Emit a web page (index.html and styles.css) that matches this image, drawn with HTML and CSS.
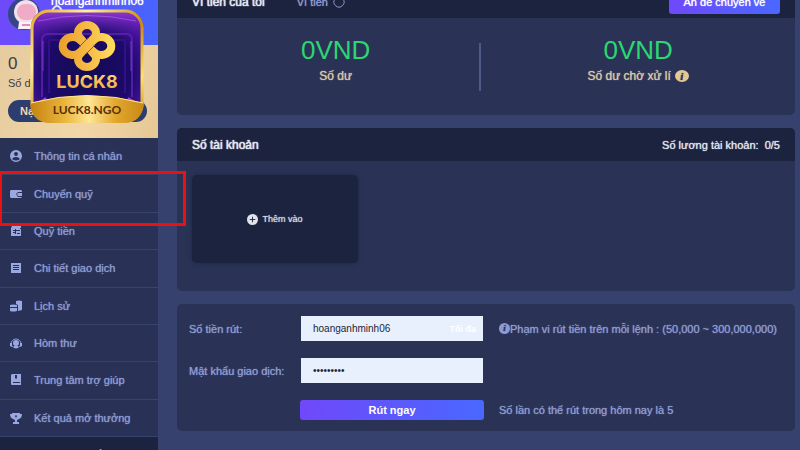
FILE: index.html
```html
<!DOCTYPE html>
<html lang="vi">
<head>
<meta charset="utf-8">
<title>Ví tiền của tôi</title>
<link rel="stylesheet" href="styles.css">
</head>
<body>
<div class="page">
  <aside class="sidebar">
    <div class="profile">
      <svg class="avatar" viewBox="0 0 32 32" aria-hidden="true">
        <circle cx="16" cy="16" r="16" fill="#364684"/>
        <circle cx="18" cy="14" r="12" fill="#f3dfe9"/>
        <rect x="9" y="6" width="19" height="16" rx="8" fill="#f0abc6"/>
        <path d="M11 24h14l2 7H10z" fill="#f8f2f8"/>
        <path d="M14 26h8v2h-8z" fill="#e78cae"/>
      </svg>
      <div class="user">
        <span class="user-name">hoanganhminh06</span>
        <svg class="rank" viewBox="0 0 12 12" aria-hidden="true"><path d="M1 7Q6 -3 11 7" fill="none" stroke="#dfe3ff" stroke-width="2"/></svg>
      </div>
    </div>
    <div class="balance">
      <span class="balance-value">0</span>
      <span class="balance-label">Số dư</span>
      <button class="deposit" type="button">Nạp</button>
    </div>
    <svg class="brand" viewBox="0 0 114 114" role="img" aria-label="LUCK8">
      <defs>
        <linearGradient id="rim" x1="0" y1="0" x2="1" y2="1">
          <stop offset="0" stop-color="#e6a51c"/><stop offset=".25" stop-color="#fff0a0"/><stop offset=".55" stop-color="#c98a10"/><stop offset=".8" stop-color="#ffe36a"/><stop offset="1" stop-color="#c98a10"/>
        </linearGradient>
        <radialGradient id="field" cx=".5" cy=".55" r=".65">
          <stop offset="0" stop-color="#130b52"/><stop offset=".6" stop-color="#1c0a68"/><stop offset="1" stop-color="#5d18ba"/>
        </radialGradient>
        <linearGradient id="top" x1="0" y1="0" x2="0" y2="1">
          <stop offset="0" stop-color="#9a3fdc"/><stop offset="1" stop-color="#4a169c" stop-opacity="0"/>
        </linearGradient>
        <linearGradient id="band">
          <stop offset="0" stop-color="#c5830f"/><stop offset=".3" stop-color="#e9b53c"/><stop offset=".52" stop-color="#ffe594"/><stop offset=".75" stop-color="#e3a72d"/><stop offset="1" stop-color="#c78a16"/>
        </linearGradient>
        <linearGradient id="gold" gradientUnits="userSpaceOnUse" x1="-28" y1="0" x2="28" y2="0">
          <stop offset="0" stop-color="#eaa02c"/><stop offset=".5" stop-color="#f6ba45"/><stop offset="1" stop-color="#ffdf5d"/>
        </linearGradient>
        <linearGradient id="word" x1="0" y1="0" x2="0" y2="1">
          <stop offset="0" stop-color="#ffdc7b"/><stop offset="1" stop-color="#eda73b"/>
        </linearGradient>
        <clipPath id="tile"><rect x="1" y="1" width="112" height="112" rx="17"/></clipPath>
      </defs>
      <g clip-path="url(#tile)">
        <rect width="114" height="114" fill="url(#field)"/>
        <rect width="114" height="30" fill="url(#top)"/>
        <path d="M8 12Q57 1 106 12" fill="none" stroke="#bd6af0" stroke-width="1" opacity=".6"/>
        <path d="M12 88V31q0-6 6-6h78q6 0 6 6v57" fill="none" stroke="#6824bd" stroke-width="2" opacity=".7"/>
        <path d="M19 84V31h76v53" fill="none" stroke="#32108a" stroke-width="2"/>
        <path d="M13 32v30M101 32v30" stroke="#9a42e6" stroke-width="1" opacity=".7"/>
        <path d="M98 89l12 7M16 89L5 96" stroke="#a33ee6" stroke-width="2"/>
      </g>
      <rect x="2" y="2" width="110" height="110" rx="17" fill="none" stroke="url(#rim)" stroke-width="3"/>
      <path d="M0 94Q57 79 114 94Q112 114 94 114H20Q2 114 0 94Z" fill="url(#band)"/>
      <path d="M1 94Q57 79 113 94" fill="none" stroke="#ffe68d" stroke-width="1"/>
      <g transform="translate(57 37)" fill="none" stroke="url(#gold)" stroke-width="8">
        <path d="M0 0L-6 -7A9 8 0 1 1 6 -7L-6 7A9 8 0 1 0 6 7L0 0"/>
        <path d="M0 0L-8 -7A10 9 0 1 0 -8 7L8 -7A10 9 0 1 1 8 7L0 0"/>
        <path d="M-8 1L1 -8M-1 8L8 -1" stroke="#9a5716" stroke-width="1"/>
        <path d="M-8 8L8 -8" stroke-width="7"/>
      </g>
      <text x="57" y="79" text-anchor="middle" class="brand-name" fill="url(#word)">LUCK8</text>
      <text x="57" y="105" text-anchor="middle" class="brand-site">LUCK8.NGO</text>
    </svg>
    <nav class="menu">
      <a href="#"><svg viewBox="0 0 14 14"><path fill-rule="evenodd" d="M7 1a6 6 0 1 0 0 12A6 6 0 0 0 7 1zm0 2a2 2 0 1 1 0 4 2 2 0 0 1 0-4zM3 10q1-2 4-2t4 2q-4 3-8 0z"/></svg>Thông tin cá nhân</a>
      <a href="#" class="marked"><svg viewBox="0 0 14 14"><path d="M2 3h10l1 1v1H9L7 7l2 3h4l-1 1H2l-1-1V4z"/><path d="M9 6h4v3H9L8 7z"/></svg>Chuyển quỹ</a>
      <a href="#"><svg viewBox="0 0 14 14"><path fill-rule="evenodd" d="M3 2h9v2h-1v1h1v7H2V4zM6 5v1H4v1h2v1H4v1h2v1h1V7h4V6H7V5zm2 4v1h3V9z"/></svg>Quỹ tiền</a>
      <a href="#"><svg viewBox="0 0 14 14"><path fill-rule="evenodd" d="M2 2h10v10H2zm2 2v1h6V4zm0 2v1h6V6zm0 2v1h6V8z"/></svg>Chi tiết giao dịch</a>
      <a href="#"><svg viewBox="0 0 14 14"><path d="M7 2q3-1 6 0v9l-4 1V6L7 5zM1 6q3-1 7 0v2H1zM1 9h7v3q-4 1-7 0z"/></svg>Lịch sử</a>
      <a href="#"><svg viewBox="0 0 14 14"><path d="M2 8a5 5 0 1 1 10 0M3 10q4 4 8 0" fill="none" stroke="currentColor"/><circle cx="7" cy="7" r="3"/><path d="M1 7h2v4L1 10zM11 7h2v3l-2 1zM5 10h4v2H5z"/></svg>Hòm thư</a>
      <a href="#"><svg viewBox="0 0 14 14"><path fill-rule="evenodd" d="M3 1h9v11H3q-1 0-1-1V2zm3 1v4l1-1 1 1V2zM4 9v1h7V9z"/></svg>Trung tâm trợ giúp</a>
      <a href="#"><svg viewBox="0 0 14 14"><path fill-rule="evenodd" d="M3 2h8v1h2q0 4-3 5L8 9v2h2v2H4v-2h2V9L4 8Q1 7 1 3h2zm4 2L6 5l1 2 1-2z"/></svg>Kết quả mở thưởng</a>
    </nav>
    <div class="sidebar-foot">Trang chủ cổ</div>
  </aside>

  <main class="content">
    <section class="card">
      <header class="card-head">
        <h2>Ví tiền của tôi</h2>
        <span class="wallet">Ví tiền
          <svg viewBox="0 0 14 14" aria-hidden="true"><path d="M3 4a5 5 0 1 0 8 0" fill="none" stroke="currentColor" stroke-width="1"/></svg>
        </span>
        <button class="primary transfer" type="button">Ấn để chuyển về</button>
      </header>
      <div class="totals">
        <div class="total"><b>0VND</b><span>Số dư</span></div>
        <div class="total"><b>0VND</b><span>Số dư chờ xử lí <i class="info sand">i</i></span></div>
      </div>
    </section>

    <section class="card">
      <header class="card-head">
        <h2>Số tài khoản</h2>
        <span class="count">Số lương tài khoản:&nbsp; 0/5</span>
      </header>
      <div class="accounts">
        <button class="add" type="button">
          <svg viewBox="0 0 12 12" aria-hidden="true"><circle cx="6" cy="6" r="6" fill="#dfe3ea"/><path d="M3 6h6M6 3v6" stroke="#1c233e" stroke-width="1"/></svg>
          Thêm vào
        </button>
      </div>
    </section>

    <form class="card withdraw">
      <label for="amount">Số tiền rút:</label>
      <div class="field">
        <input id="amount" type="text" value="hoanganhminh06">
        <button class="max" type="button">Tối đa</button>
      </div>
      <p class="hint"><i class="info">i</i>Phạm vi rút tiền trên mỗi lệnh : (50,000 ~ 300,000,000)</p>
      <label for="pin">Mật khẩu giao dịch:</label>
      <div class="field"><input id="pin" type="password" value="123456789"></div>
      <button class="primary submit" type="button">Rút ngay</button>
      <p class="hint">Số lần có thể rút trong hôm nay là 5</p>
    </form>
  </main>
</div>
</body>
</html>
```
FILE: styles.css
```css
*, *::after { box-sizing: border-box; }

body {
  margin: 0;
  overflow: hidden;
  background: #36416d;
  color: #8e9ad2;
  font: 11px/16px "Liberation Sans", Arial, sans-serif;
}

button, input { font: inherit; border: 0; }
h2, p { margin: 0; }

h2, .menu, .count, .wallet, .transfer, .user-name, .total span, .hint, .add, .withdraw label {
  text-shadow: 0 0 1px currentColor;
}

.page { display: flex; height: 100vh; }

/* Sidebar */
.sidebar {
  position: relative;
  display: flex;
  flex-direction: column;
  flex: 0 0 158px;
  background: #293256;
}

.profile {
  display: flex;
  gap: 11px;
  height: 60px;
  margin-top: -15px;
  padding: 13px 0 0 8px;
  background: linear-gradient(100deg, #7048fa, #4665ff);
  color: #fff;
}

.avatar { flex: none; width: 32px; height: 32px; }
.user-name { display: block; font-size: 12px; line-height: 6px; }
.rank { display: block; width: 12px; height: 12px; }

.balance {
  display: flex;
  flex-direction: column;
  align-items: flex-start;
  height: 93px;
  padding: 9px 8px 0;
  background: linear-gradient(110deg, #e6cba0, #f1d6a7 60%, #e5c795);
  color: #3e3c43;
}

.balance-value { font-size: 17px; line-height: 20px; }
.balance-label { margin-bottom: 8px; line-height: 18px; }

.deposit {
  width: 139px;
  height: 22px;
  padding: 0 12px;
  border-radius: 11px;
  background: #2d3d70;
  color: #f1d6a7;
  font-weight: bold;
  text-align: left;
}

.brand {
  position: absolute;
  top: 9px;
  left: 30px;
  width: 114px;
  height: 114px;
}

.brand-name { font: 700 18px Inter, sans-serif; }
.brand-site { font: bold 12px Lato, sans-serif; fill: #573006; }

.menu { display: flex; flex: 1; flex-direction: column; }

.menu a {
  position: relative;
  display: flex;
  flex: 1;
  align-items: center;
  gap: 11px;
  padding-left: 9px;
  border-bottom: 1px solid #38436c;
  color: inherit;
  text-decoration: none;
}

.menu svg { width: 14px; height: 14px; fill: #9ba7df; }

.menu .marked::after {
  content: "";
  position: absolute;
  z-index: 1;
  top: -4px;
  left: -1px;
  width: 187px;
  height: 55px;
  border: 3px solid #ec1010;
}

.sidebar-foot {
  height: 13px;
  padding: 9px 56px 0 0;
  overflow: hidden;
  background: #1c233e;
  color: #fff;
  font-weight: bold;
  text-align: right;
}

/* Content */
.content {
  display: flex;
  flex: 1;
  flex-direction: column;
  gap: 13px;
  min-width: 0;
  margin-top: -15px;
  padding: 0 5px 0 19px;
}

.card { border-radius: 5px; background: #2a3356; }

.card-head {
  display: flex;
  align-items: center;
  height: 33px;
  padding: 0 15px;
  border-radius: 5px 5px 0 0;
  background: #1c233e;
  color: #e3e6f0;
}

h2 { font-size: 12px; font-weight: normal; text-shadow: 0 0 1px currentColor, 0 0 1px currentColor; }

.wallet { display: flex; align-items: center; gap: 4px; margin-left: 32px; color: #8e9ad2; }
.wallet svg { width: 14px; height: 14px; }
.count { margin-left: auto; }

.primary {
  border-radius: 3px;
  background: linear-gradient(100deg, #7048fa, #4968ff);
  color: #fff;
  font-weight: bold;
}

.transfer { width: 111px; height: 24px; margin-left: auto; padding: 0; font-weight: normal; }

.totals { display: flex; height: 97px; padding: 25px 0 24px 15px; }

.total {
  display: flex;
  flex: 1;
  flex-direction: column;
  align-items: center;
  gap: 6px;
  color: #d9c6a6;
}

.total:first-child { flex: 0 0 48%; border-right: 2px solid #4c5989; }
.total b { color: #2cd673; font-size: 26px; font-weight: normal; line-height: 14px; padding-bottom: 4px; }
.total span { display: flex; align-items: center; gap: 4px; font-size: 12px; line-height: 18px; }

.info {
  display: inline-grid;
  place-items: center;
  width: 11px;
  height: 11px;
  border-radius: 50%;
  background: #8e9ad2;
  color: #2a3356;
  font: italic bold 9px/11px "Liberation Serif", serif;
}

.sand { width: 14px; height: 12px; background: #e5c795; font-size: 11px; }

.accounts { padding: 14px 15px 28px; }

.add {
  display: flex;
  align-items: center;
  justify-content: center;
  gap: 4px;
  width: 166px;
  height: 88px;
  border-radius: 5px;
  background: #1c233e;
  box-shadow: 0 0 5px #1f2745;
  color: #d4d8e2;
  font-size: 9px;
}

.add svg { width: 11px; height: 11px; }

.withdraw {
  display: grid;
  grid-template-columns: 99px 184px 1fr;
  grid-template-rows: 25px 25px 20px;
  column-gap: 12px;
  row-gap: 17px;
  align-items: center;
  padding: 12px 12px 11px;
}

.field { position: relative; padding: 0 1px; }

.field input {
  display: block;
  width: 100%;
  height: 25px;
  padding: 0 12px;
  background: #e8f0fe;
  color: #202634;
  font-size: 10px;
}

.max {
  position: absolute;
  top: 0;
  right: 4px;
  height: 25px;
  padding: 0 4px;
  background: none;
  color: #fff;
  font-size: 9px;
  font-weight: bold;
}

.hint { display: flex; align-items: center; padding-left: 3px; white-space: nowrap; }
.submit { grid-column: 2; height: 20px; padding: 0; }
.withdraw label { white-space: nowrap; }
```
